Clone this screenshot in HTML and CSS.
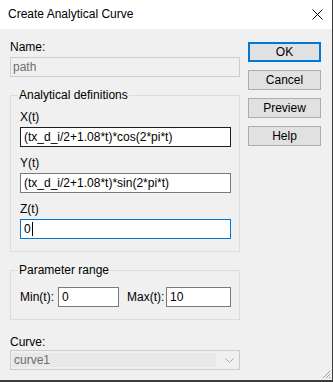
FILE: index.html
```html
<!DOCTYPE html>
<html>
  <head>
    <title>Create Analytical Curve</title>
    <meta charset="UTF-8" />
    <link rel="stylesheet" href="styles.css">
  </head>

  <body>
    <div class="window">
      <div class="titlebar">
        <span class="title">Create Analytical Curve</span>
        <svg class="close_icon" width="11" height="11" viewBox="0 0 11 11">
          <path d="M0.5 0.5 L10.5 10.5 M10.5 0.5 L0.5 10.5" stroke="#000" stroke-width="1" fill="none" />
        </svg>
      </div>

      <div class="dialog">
        <div class="main">
          <div class="form">
            <div class="label name_label">Name:</div>
            <div class="field disabled"><span>path</span></div>

            <fieldset class="group defs">
              <legend>Analytical definitions</legend>
              <div class="label def_label first">X(t)</div>
              <div class="field def_field dark">(tx_d_i/2+1.08*t)*cos(2*pi*t)</div>
              <div class="label def_label">Y(t)</div>
              <div class="field def_field">(tx_d_i/2+1.08*t)*sin(2*pi*t)</div>
              <div class="label def_label">Z(t)</div>
              <div class="field def_field focused">0<span class="caret"></span></div>
            </fieldset>

            <fieldset class="group range">
              <legend>Parameter range</legend>
              <div class="range_row">
                <span class="range_label min_label">Min(t):</span>
                <div class="field min_field">0</div>
                <span class="range_label max_label">Max(t):</span>
                <div class="field max_field">10</div>
              </div>
            </fieldset>

            <div class="label curve_label">Curve:</div>
            <div class="combo">
              <span class="combo_text">curve1</span>
              <svg class="chevron" width="9" height="5" viewBox="0 0 9 5">
                <path d="M0.5 0.5 L4.5 4.5 L8.5 0.5" stroke="#a6a6a6" stroke-width="1" fill="none" />
              </svg>
            </div>
          </div>

          <div class="buttons">
            <button class="btn default_btn">OK</button>
            <button class="btn">Cancel</button>
            <button class="btn">Preview</button>
            <button class="btn">Help</button>
          </div>
        </div>

        <div class="grip_row">
          <svg width="9" height="9" viewBox="0 0 9 9">
            <path d="M8 1 L1 8 M8 4 L4 8 M8 7 L7 8" stroke="#a0a0a0" stroke-width="1" fill="none" />
          </svg>
        </div>
      </div>
    </div>
  </body>
</html>
```

FILE: styles.css
```css
body {
  margin: 0;
  background: #3c3c3c;
  font-family: "Liberation Sans", Arial, sans-serif;
  font-size: 12px;
  color: #000;
}

.window {
  width: 332px;
  height: 380px;
  background: #f0f0f0;
  display: flex;
  flex-direction: column;
}

.titlebar {
  height: 30px;
  background: #fff;
  display: flex;
  align-items: center;
  justify-content: space-between;
  padding: 0 9px 0 8px;
}

.title {
  line-height: 15px;
}

.dialog {
  flex: 1;
  display: flex;
  flex-direction: column;
}

.main {
  display: flex;
}

.form {
  width: 230px;
  margin-left: 10px;
  display: flex;
  flex-direction: column;
}

.label {
  line-height: 15px;
  height: 15px;
}

.name_label {
  margin-top: 11px;
}

.field {
  box-sizing: border-box;
  height: 20px;
  line-height: 18px;
  padding: 0 3px;
  background: #fff;
  border: 1px solid #7a7a7a;
  white-space: nowrap;
  overflow: hidden;
}

.field.disabled {
  margin-top: 2px;
  padding-left: 2px;
  background: #f0f0f0;
  border-color: #cccccc;
  color: #6d6d6d;
}

.field.dark {
  border-color: #1e1e1e;
}

.field.focused {
  border-color: #0078d7;
}

.caret {
  display: inline-block;
  width: 1px;
  height: 14px;
  margin-left: 1px;
  background: #000;
  vertical-align: -3px;
}

.group {
  margin: 11px 0 0;
  padding: 0 8px 12px 9px;
  border: 1px solid #dcdcdc;
  min-width: 0;
}

.group legend {
  padding: 0 1px;
  margin-left: -2px;
  line-height: 15px;
}

.def_label {
  margin-top: 9px;
}

.def_label.first {
  margin-top: 7px;
}

.def_field {
  margin-top: 2px;
}

.range_row {
  display: flex;
  align-items: center;
  margin-top: 9px;
}

.range_label {
  line-height: 15px;
}

.min_label {
  width: 38px;
}

.min_field {
  width: 61px;
}

.max_label {
  width: 39px;
  margin-left: 8px;
}

.max_field {
  width: 65px;
}

.curve_label {
  margin-top: 15px;
}

.combo {
  box-sizing: border-box;
  height: 20px;
  border: 1px solid #cccccc;
  background: #f0f0f0;
  display: flex;
  align-items: center;
}

.combo_text {
  flex: 1;
  align-self: stretch;
  margin: 2px 0 2px 1px;
  padding-left: 2px;
  line-height: 14px;
  background: #e8e8e8;
  color: #6d6d6d;
}

.chevron {
  margin: 0 5px 0 9px;
}

.buttons {
  margin: 13px 0 0 8px;
  display: flex;
  flex-direction: column;
  gap: 8px;
}

.btn {
  box-sizing: border-box;
  width: 73px;
  height: 20px;
  padding: 0;
  background: #e1e1e1;
  border: 1px solid #adadad;
  font-family: "Liberation Sans", Arial, sans-serif;
  font-size: 12px;
  color: #000;
}

.default_btn {
  border: 2px solid #0078d7;
}

.grip_row {
  margin-top: auto;
  display: flex;
  justify-content: flex-end;
  padding: 0 1px 1px 0;
}

.grip_row svg {
  display: block;
}
```
